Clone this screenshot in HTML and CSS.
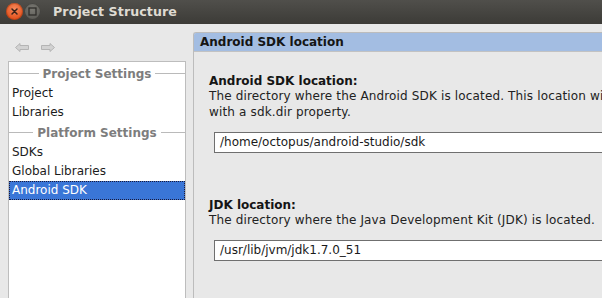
FILE: index.html
```html
<!DOCTYPE html>
<html>
<head>
<meta charset="utf-8">
<link rel="stylesheet" href="styles.css">
</head>
<body>
<div class="window">
  <div class="titlebar">
    <span class="wbtn close">
      <svg width="17" height="17" viewBox="0 0 17 17"><path d="M6 6 L11 11 M11 6 L6 11" stroke="#3a2118" stroke-width="1.5" stroke-linecap="round"/></svg>
    </span>
    <span class="wbtn min">
      <svg width="17" height="17" viewBox="0 0 17 17"><rect x="5" y="5" width="7" height="7" fill="none" stroke="#2e2d2a" stroke-width="1.3"/></svg>
    </span>
    <span class="title">Project Structure</span>
  </div>
  <div class="main">
    <div class="leftcol">
      <div class="nav">
        <svg class="arrow" width="14" height="9" viewBox="0 0 14 9"><path d="M0.5 4.5 L5 0.5 L5 2.5 L13.5 2.5 L13.5 6.5 L5 6.5 L5 8.5 Z" fill="#d2d2d2" stroke="#b4b4b4" stroke-width="1" stroke-linejoin="miter"/></svg>
        <svg class="arrow" width="14" height="9" viewBox="0 0 14 9"><path d="M13.5 4.5 L9 0.5 L9 2.5 L0.5 2.5 L0.5 6.5 L9 6.5 L9 8.5 Z" fill="#d2d2d2" stroke="#b4b4b4" stroke-width="1" stroke-linejoin="miter"/></svg>
      </div>
      <div class="list">
        <div class="group">Project Settings</div>
        <div class="item">Project</div>
        <div class="item">Libraries</div>
        <div class="group">Platform Settings</div>
        <div class="item">SDKs</div>
        <div class="item">Global Libraries</div>
        <div class="item selected">Android SDK</div>
      </div>
    </div>
    <div class="panel">
      <div class="panel-head">Android SDK location</div>
      <div class="panel-body">
        <div class="field">
          <div class="label">Android SDK location:</div>
          <div class="desc">The directory where the Android SDK is located. This location will be saved in local.properties</div>
          <div class="desc">with a sdk.dir property.</div>
          <div class="input">/home/octopus/android-studio/sdk</div>
        </div>
        <div class="field">
          <div class="label">JDK location:</div>
          <div class="desc">The directory where the Java Development Kit (JDK) is located.</div>
          <div class="input">/usr/lib/jvm/jdk1.7.0_51</div>
        </div>
      </div>
    </div>
  </div>
</div>
</body>
</html>
```
FILE: styles.css
```css
html, body {
  margin: 0;
  padding: 0;
  width: 602px;
  height: 298px;
  overflow: hidden;
  background: #e8e8e8;
  font-family: "DejaVu Sans", sans-serif;
  font-size: 12px;
  color: #1e1e1e;
}

.window {
  display: flex;
  flex-direction: column;
  width: 602px;
  height: 298px;
  overflow: hidden;
}

.titlebar {
  height: 24px;
  flex: none;
  display: flex;
  align-items: center;
  padding-left: 6px;
  gap: 1px;
  background: linear-gradient(#504f4b, #3c3b37);
  box-sizing: border-box;
  padding-bottom: 2px;
}

.wbtn {
  width: 17px;
  height: 17px;
  border-radius: 50%;
  display: block;
  flex: none;
}

.wbtn svg { display: block; }

.close {
  background: radial-gradient(circle at 50% 35%, #f58a5c, #e4531f 70%, #c9441a);
  box-shadow: inset 0 0 0 1px rgba(120, 40, 10, 0.35);
}

.min {
  background: radial-gradient(circle at 50% 35%, #7a7973, #5d5c57 70%, #4d4c48);
  box-shadow: inset 0 0 0 1px rgba(30, 30, 28, 0.45);
}

.title {
  margin-left: 11px;
  color: #dfdbd2;
  font-weight: bold;
  font-size: 12.6px;
  letter-spacing: 0.1px;
}

.main {
  flex: 1;
  display: flex;
  gap: 7px;
  min-height: 0;
}

.leftcol {
  flex: none;
  width: 178px;
  margin-left: 8px;
  display: flex;
  flex-direction: column;
  min-height: 0;
}

.nav {
  height: 37px;
  flex: none;
  box-sizing: border-box;
  padding-top: 19px;
  padding-left: 7px;
  display: flex;
  gap: 12px;
  align-items: flex-start;
}

.arrow { display: block; }

.list {
  flex: 1;
  background: #ffffff;
  border: 1px solid #bdbdbd;
  border-bottom: none;
  box-sizing: border-box;
  padding-top: 1px;
  min-height: 0;
}

.group {
  height: 21px;
  display: flex;
  align-items: center;
  gap: 4px;
  color: #7d7d7d;
  font-weight: bold;
  white-space: nowrap;
}

.group::before,
.group::after {
  content: "";
  flex: 1;
  height: 1px;
  background: #bababa;
}

.item {
  height: 19px;
  line-height: 19px;
  padding-left: 3px;
  white-space: nowrap;
  color: #1c1c1c;
}

.item.selected {
  background: #3a76d7;
  color: #ffffff;
  border: 1px dotted #1a1a3a;
  line-height: 17px;
  padding-left: 2px;
  box-sizing: border-box;
}

.panel {
  flex: 1;
  margin-top: 8px;
  border-left: 1px solid #bcbcbc;
  border-top: 1px solid #bcbcbc;
  border-top-left-radius: 3px;
  overflow: hidden;
  min-width: 0;
  display: flex;
  flex-direction: column;
}

.panel-head {
  height: 18px;
  line-height: 18px;
  background: #a3bde2;
  border-bottom: 1px solid #c2c2c2;
  padding-left: 6px;
  font-weight: bold;
  color: #151515;
  flex: none;
}

.panel-body {
  padding: 22px 0 0 15px;
  display: flex;
  flex-direction: column;
  gap: 45px;
}

.field {
  display: flex;
  flex-direction: column;
}

.label {
  font-weight: bold;
  line-height: 15px;
  white-space: nowrap;
  color: #151515;
}

.desc {
  line-height: 15px;
  white-space: nowrap;
  color: #222222;
  letter-spacing: 0.15px;
}

.desc + .desc { margin-top: 0.5px; }

.input {
  margin-top: 12px;
  margin-left: 5px;
  width: 420px;
  height: 21px;
  box-sizing: border-box;
  border: 1px solid #6f6f6f;
  background: #ffffff;
  padding-left: 5px;
  line-height: 19px;
  white-space: nowrap;
  color: #1a1a1a;
}
```
